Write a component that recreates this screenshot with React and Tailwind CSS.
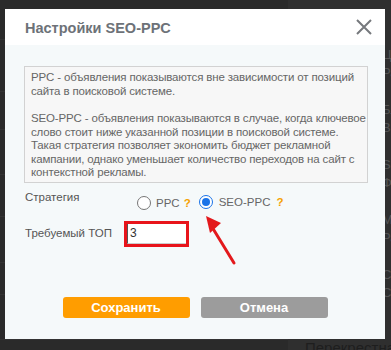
import { useState } from 'react'

const sideGroups = [
  ['Целевой', 'Расход'],
  ['Блокировка', 'Время'],
  ['SEO-PPC', 'Фильтры'],
  ['Минус-слова', 'Расписание'],
  ['Счётчик', 'Статистика'],
]

function Radio({ checked }) {
  return checked ? (
    <span className="flex items-center justify-center w-[14px] h-[14px] rounded-full border-[1.5px] border-[#1a73e8] bg-white">
      <span className="w-[8px] h-[8px] rounded-full bg-[#1a73e8]" />
    </span>
  ) : (
    <span className="w-[14px] h-[14px] rounded-full border border-[#767676] bg-white" />
  )
}

export default function App() {
  const [strategy, setStrategy] = useState('seo')

  return (
    <div className="relative w-[391px] h-[350px] overflow-hidden bg-[#2a2a2a] font-['Liberation_Sans',Arial,sans-serif]">
      {/* Page behind the overlay */}
      <div className="flex h-full">
        <div className="flex-1 flex flex-col">
          <div className="h-[40px] border-b border-[#333]" />
          <div className="h-[52px] border-b border-[#333]" />
          <div className="h-[38px] border-b border-[#333]" />
          <div className="h-[45px] border-b border-[#333]" />
          <div className="h-[42px] border-b border-[#333]" />
          <div className="h-[46px] border-b border-[#333]" />
          <div className="h-[32px] border-b border-[#333]" />
          <div className="h-[45px] border-b border-[#333]" />
        </div>
        <div className="w-[103px] bg-[#2f2f2f] flex flex-col pt-[46px] text-[13px] leading-[18px] text-[#555] whitespace-nowrap">
          {sideGroups.map((g, i) => (
            <div key={i} className="pl-[94px] mb-[19px]">
              <div>{g[0]}</div>
              <div>{g[1]}</div>
            </div>
          ))}
          <div className="flex items-center gap-[8px] mt-auto mb-[-7px] pl-[9px] text-[15px] text-[#1e1e1e]">
            <span className="w-[9px] h-[9px] bg-[#1a1a1a]" />
            Перекрестная
          </div>
        </div>
      </div>

      {/* Modal */}
      <div className="absolute left-[5px] top-[9px] w-[380px] h-[330px] flex flex-col bg-[#f5f9fa]">
        <div className="h-[36px] bg-white flex items-center justify-between pl-[20px] pr-[12px]">
          <h2 className="text-[14.5px] font-bold text-[#6d7278] pt-[3px]">Настройки SEO-PPC</h2>
          <button className="w-[18px] h-[18px] flex items-center justify-center">
            <svg width="16" height="16" viewBox="0 0 16 16" fill="none" stroke="#76797d" strokeWidth="2">
              <path d="M1 1L15 15M15 1L1 15" />
            </svg>
          </button>
        </div>

        <div className="relative flex-1 flex flex-col px-[19px] pt-[21px]">
          <div className="w-[344px] border border-[#d2d2d2] bg-[#f7f7f7] px-[6px] pt-[4px] pb-[2px] text-[11.5px] tracking-[-0.15px] leading-[13.5px] text-[#666] whitespace-nowrap">
            <p>PPC - объявления показываются вне зависимости от позиций<br />сайта в поисковой системе.</p>
            <p className="mt-[14px]">
              SEO-PPC - объявления показываются в случае, когда ключевое<br />
              слово стоит ниже указанной позиции в поисковой системе.<br />
              Такая стратегия позволяет экономить бюджет рекламной<br />
              кампании, однако уменьшает количество переходов на сайт с<br />
              контекстной рекламы.
            </p>
          </div>

          <div className="flex items-start mt-[7px] text-[11.5px] text-[#555]">
            <span className="w-[113px] pl-[1px] leading-[14px]">Стратегия</span>
            <div className="flex items-center mt-[5px]">
              <label className="flex items-center" onClick={() => setStrategy('ppc')}>
                <Radio checked={strategy === 'ppc'} />
                <span className="ml-[5px] text-[#666]">PPC</span>
                <span className="ml-[4px] font-bold text-[#f5a100]">?</span>
              </label>
              <label className="flex items-center ml-[8px] -mt-[2px]" onClick={() => setStrategy('seo')}>
                <Radio checked={strategy === 'seo'} />
                <span className="ml-[6px] text-[#666]">SEO-PPC</span>
                <span className="ml-[6px] font-bold text-[#f5a100]">?</span>
              </label>
            </div>
          </div>

          <div className="flex items-center mt-[9px] text-[11.5px] text-[#555]">
            <span className="w-[100px] pl-[1px]">Требуемый ТОП</span>
            <div className="w-[65px] h-[26px] border-[3px] border-[#e8141b] bg-white">
              <input
                defaultValue="3"
                className="w-full h-full border-l border-l-[#555] border-b border-b-[#ccc] pl-[2px] text-[12px] text-[#333] outline-none bg-white"
              />
            </div>
          </div>

          <div className="flex justify-center gap-[11px] mt-[50px]">
            <button className="w-[127px] h-[21px] rounded-[3px] bg-[#ff9d00] text-white text-[13px] font-bold">Сохранить</button>
            <button className="w-[127px] h-[21px] rounded-[3px] bg-[#9c9c9c] text-white text-[13px] font-bold">Отмена</button>
          </div>

          {/* annotation arrow */}
          <svg className="absolute left-[193px] top-[162px]" width="40" height="60" viewBox="0 0 40 60">
            <path d="M36 56L14 20" stroke="#e3191c" strokeWidth="3" strokeLinecap="round" />
            <path d="M8 9L23 16L12 26Z" fill="#e3191c" />
          </svg>
        </div>
      </div>
    </div>
  )
}
